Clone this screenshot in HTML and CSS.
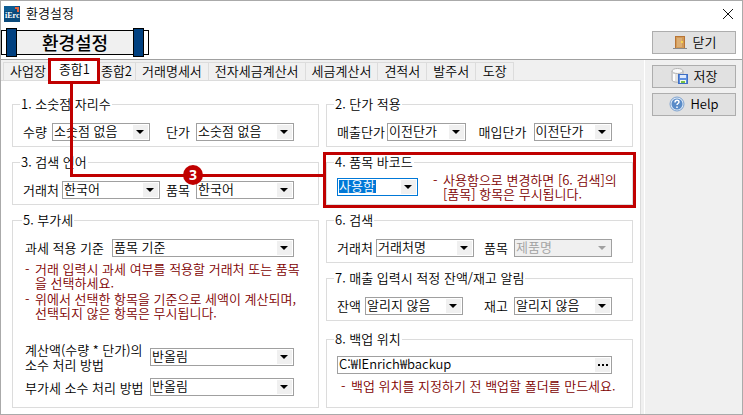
FILE: index.html
```
<!DOCTYPE html>
<html lang="ko">
<head>
    <meta charset="UTF-8">
    <meta name="viewport" content="width=device-width, initial-scale=1.0">
    <title>환경설정</title>
    <link rel="stylesheet" href="styles.css">
</head>
<body>
    <div class="window">
        <div class="titlebar">
            <svg class="app-icon" width="16" height="16" viewBox="0 0 16 16">
                <rect width="16" height="16" fill="#0a4a7c"/>
                <path d="M0 0h11v5H0z" fill="#0d5c93"/>
                <path d="M11 1h4v5h-2V3h-2z" fill="#e8643c"/>
                <text x="1" y="12" class="app-icon-text">iErc</text>
            </svg>
            <span class="title">환경설정</span>
            <button class="close" aria-label="닫기">
                <svg width="10" height="10" viewBox="0 0 10 10"><path d="M0 0l10 10M10 0L0 10" stroke="#111" fill="none"/></svg>
            </button>
        </div>

        <header class="header">
            <div class="banner"><h1>환경설정</h1></div>
            <button class="action">
                <svg width="16" height="16" viewBox="0 0 16 16">
                    <path d="M1 14.500h14" stroke="#8a8a8a"/>
                    <rect x="3" y="2" width="10" height="12" fill="#b87434"/>
                    <rect x="4" y="3" width="8" height="11" fill="#d29a58"/>
                    <rect x="5" y="4" width="5" height="9" fill="#dcae74"/>
                    <circle cx="10" cy="8" r="1" fill="#ffe24a"/>
                </svg>
                닫기
            </button>
        </header>

        <div class="body">
            <main class="main">
                <div class="tabs" role="tablist">
                    <button class="tab" role="tab">사업장</button>
                    <button class="tab active" role="tab" aria-selected="true">종합1</button>
                    <button class="tab" role="tab">종합2</button>
                    <button class="tab" role="tab">거래명세서</button>
                    <button class="tab" role="tab">전자세금계산서</button>
                    <button class="tab" role="tab">세금계산서</button>
                    <button class="tab" role="tab">견적서</button>
                    <button class="tab" role="tab">발주서</button>
                    <button class="tab" role="tab">도장</button>
                </div>

                <div class="panel" role="tabpanel">
                    <div class="column">
                        <fieldset class="group">
                            <legend>1. 소숫점 자리수</legend>
                            <div class="row decimals">
                                <label for="qty">수량</label>
                                <span class="combo"><select id="qty"><option>소숫점 없음</option></select></span>
                                <label for="price">단가</label>
                                <span class="combo"><select id="price"><option>소숫점 없음</option></select></span>
                            </div>
                        </fieldset>

                        <fieldset class="group">
                            <legend>3. 검색 언어</legend>
                            <div class="row language">
                                <label for="langClient">거래처</label>
                                <span class="combo"><select id="langClient"><option>한국어</option></select></span>
                                <label for="langItem">품목</label>
                                <span class="combo"><select id="langItem"><option>한국어</option></select></span>
                            </div>
                        </fieldset>

                        <fieldset class="group vat">
                            <legend>5. 부가세</legend>
                            <div class="row vat-base">
                                <label for="vatBase">과세 적용 기준</label>
                                <span class="combo"><select id="vatBase"><option>품목 기준</option></select></span>
                            </div>
                            <ul class="notes">
                                <li>거래 입력시 과세 여부를 적용할 거래처 또는 품목<br>을 선택하세요.</li>
                                <li>위에서 선택한 항목을 기준으로 세액이 계산되며,<br>선택되지 않은 항목은 무시됩니다.</li>
                            </ul>
                            <div class="row rounding">
                                <label for="amountRound">계산액(수량 * 단가)의<br>소수 처리 방법</label>
                                <span class="combo"><select id="amountRound"><option>반올림</option></select></span>
                                <label for="vatRound">부가세 소수 처리 방법</label>
                                <span class="combo"><select id="vatRound"><option>반올림</option></select></span>
                            </div>
                        </fieldset>
                    </div>

                    <div class="column">
                        <fieldset class="group">
                            <legend>2. 단가 적용</legend>
                            <div class="row prices">
                                <label for="salePrice">매출단가</label>
                                <span class="combo"><select id="salePrice"><option>이전단가</option></select></span>
                                <label for="buyPrice">매입단가</label>
                                <span class="combo"><select id="buyPrice"><option>이전단가</option></select></span>
                            </div>
                        </fieldset>

                        <fieldset class="group barcode">
                            <legend>4. 품목 바코드</legend>
                            <div class="row barcode-row">
                                <span class="combo focused"><select id="barcode" aria-label="품목 바코드"><option>사용함</option></select></span>
                                <ul class="notes">
                                    <li>사용함으로 변경하면 [6. 검색]의<br>[품목] 항목은 무시됩니다.</li>
                                </ul>
                            </div>
                        </fieldset>

                        <fieldset class="group">
                            <legend>6. 검색</legend>
                            <div class="row search">
                                <label for="searchClient">거래처</label>
                                <span class="combo"><select id="searchClient"><option>거래처명</option></select></span>
                                <label for="searchItem">품목</label>
                                <span class="combo disabled"><select id="searchItem" disabled><option>제품명</option></select></span>
                            </div>
                        </fieldset>

                        <fieldset class="group">
                            <legend>7. 매출 입력시 적정 잔액/재고 알림</legend>
                            <div class="row alerts">
                                <label for="balance">잔액</label>
                                <span class="combo"><select id="balance"><option>알리지 않음</option></select></span>
                                <label for="stock">재고</label>
                                <span class="combo"><select id="stock"><option>알리지 않음</option></select></span>
                            </div>
                        </fieldset>

                        <fieldset class="group backup">
                            <legend>8. 백업 위치</legend>
                            <div class="path">
                                <input type="text" id="backupPath" aria-label="백업 위치" value="C:₩IEnrich₩backup">
                                <button class="browse" aria-label="찾아보기"><i></i><i></i><i></i></button>
                            </div>
                            <ul class="notes">
                                <li>백업 위치를 지정하기 전 백업할 폴더를 만드세요.</li>
                            </ul>
                        </fieldset>
                    </div>

                    <div class="connector"><span class="step">3</span></div>
                </div>
            </main>

            <aside class="side">
                <button class="action">
                    <svg width="18" height="16" viewBox="0 0 18 16">
                        <path d="M1 3v9c0 3 11 3 11 0V3z" fill="#e2e2e2" stroke="#b4b4b4"/>
                        <ellipse cx="6.500" cy="3" rx="5.500" ry="2.500" fill="#fafafa" stroke="#b4b4b4"/>
                        <path d="M3 6v7" stroke="#fff" stroke-width="2"/>
                        <rect x="7.500" y="6.500" width="9" height="9" fill="#5f8fe0" stroke="#3f6fc4"/>
                        <rect x="9" y="7" width="6" height="3" fill="#dfeafb"/>
                        <rect x="9" y="12" width="6" height="3" fill="#f4fbe8"/>
                        <rect x="10" y="13" width="4" height="2" fill="#78c043"/>
                    </svg>
                    저장
                </button>
                <button class="action">
                    <svg width="16" height="16" viewBox="0 0 16 16">
                        <circle cx="8" cy="8" r="7" fill="#dbe7f5" stroke="#7fa3cf"/>
                        <circle cx="8" cy="8" r="5.500" fill="#5a8cc8"/>
                        <path d="M6 6.500c0-3 4-3 4-.5 0 1.500-2 1.500-2 3M8 10.500v1.500" fill="none" stroke="#fff" stroke-width="1.500"/>
                    </svg>
                    Help
                </button>
            </aside>
        </div>
    </div>
</body>
</html>
```
FILE: styles.css
```
* {
    box-sizing: border-box;
}

body {
    margin: 0;
    font-family: "Noto Sans CJK KR", "Noto Sans", sans-serif;
    font-size: 13px;
    font-weight: 350;
    line-height: 16px;
    color: #000;
    background: #fff;
}

button,
select,
input {
    font: inherit;
    color: inherit;
    margin: 0;
    padding: 0;
}

.window {
    display: flex;
    flex-direction: column;
    min-height: 100vh;
    border: 1px solid #aaa;
}

/* Title bar and header */
.titlebar {
    display: flex;
    align-items: center;
    height: 25px;
    padding: 0 9px 0 3px;
}

.app-icon-text {
    font-family: "Liberation Serif", serif;
    font-size: 8px;
    font-weight: bold;
    fill: #fff;
}

.title {
    flex: 1;
    margin-left: 6px;
    padding-bottom: 2px;
}

.close {
    display: flex;
    border: 0;
    background: none;
}

.header {
    display: flex;
    align-items: center;
    justify-content: space-between;
    height: 34px;
    padding-right: 6px;
    border-bottom: 1px solid #a0a0a0;
}

.banner {
    display: flex;
    justify-content: space-between;
    width: 148px;
    height: 25px;
    padding: 0 4px;
    border: 1px solid #000;
    background: linear-gradient(#f0f0f0, #f0f0f0) center / 128px 100% no-repeat;
}

.banner::before,
.banner::after {
    content: "";
    width: 9px;
    margin: -3px 0;
    border: 1px solid #000;
    background: #004080;
}

.banner h1 {
    margin: 0;
    font-size: 18px;
    font-weight: 500;
    line-height: 22px;
}

.action {
    display: flex;
    align-items: center;
    justify-content: center;
    gap: 5px;
    width: 84px;
    height: 23px;
    padding-bottom: 1px;
    border: 1px solid #adadad;
    background: #e1e1e1;
}

/* Body */
.body {
    display: flex;
    flex: 1;
    background: #f0f0f0;
}

.main {
    display: flex;
    flex: 1;
    flex-direction: column;
    min-width: 0;
    padding-top: 2px;
}

.side {
    display: flex;
    flex: none;
    flex-direction: column;
    gap: 5px;
    width: 98px;
    margin-left: 3px;
    padding: 5px 6px 0 7px;
    border-left: 1px solid #fff;
}

/* Tabs */
.tabs {
    display: flex;
    height: 18px;
    padding-left: 2px;
}

.tab {
    min-width: 38px;
    padding: 0 6px 1px;
    line-height: 16px;
    white-space: nowrap;
    border: 1px solid #dcdcdc;
    border-width: 1px 1px 0 0;
    background: #f0f0f0;
}

.tab:first-child {
    border-left-width: 1px;
}

.tab.active {
    position: relative;
    z-index: 1;
    margin: -2px -9px -1px -3px;
    padding: 0 9px 3px;
    border: 0;
    background: #fff;
}

.tab.active + .tab {
    padding-left: 11px;
    padding-right: 3px;
}

.tab.active::after {
    content: "";
    position: absolute;
    inset: -2px -1px -3px -2px;
    border: 3px solid #c00000;
}

.panel {
    position: relative;
    display: flex;
    flex: 1;
    gap: 7px;
    padding: 15px 7px 6px 11px;
    border: 1px solid #dcdcdc;
    border-width: 1px 1px 0 0;
    background: #fff;
}

.column {
    display: flex;
    flex: 1;
    flex-direction: column;
    gap: 7px;
    min-width: 0;
}

/* Group boxes */
.group {
    position: relative;
    min-width: 0;
    margin: 0;
    padding: 11px 24px 5px 10px;
    border: 1px solid #dcdcdc;
}

.column + .column .group {
    padding-right: 20px;
}

legend {
    margin-left: -3px;
    padding: 0 1px;
}

.row {
    display: grid;
    align-items: center;
    white-space: nowrap;
}

.decimals {
    grid-template-columns: 29px 1fr 46px 1fr;
}

.language {
    grid-template-columns: 39px 1fr 36px 1fr;
}

.prices {
    grid-template-columns: 50px 1fr 68px 1fr;
}

.search {
    grid-template-columns: 39px 1fr 40px 1fr;
}

.alerts {
    grid-template-columns: 28px 1fr 51px 1fr;
}

.decimals label + .combo + label {
    padding-left: 16px;
}

.language label + .combo + label {
    padding-left: 6px;
}

.prices label + .combo + label {
    padding-left: 13px;
}

.search label + .combo + label {
    padding-left: 10px;
}

.alerts label + .combo + label {
    padding-left: 21px;
}

.combo {
    position: relative;
    display: flex;
    height: 18px;
    border: 1px solid #a0a0a0;
    background: #fff;
}

.combo select {
    appearance: none;
    width: 100%;
    height: 18px;
    margin-top: -2px;
    padding: 0 18px 0 1px;
    line-height: 18px;
    border: 0;
    border-radius: 0;
    outline: 0;
    background: none;
}

.combo::before {
    content: "";
    position: absolute;
    top: 1px;
    right: 1px;
    width: 15px;
    height: 14px;
    background: #f0f0f0;
    pointer-events: none;
}

.combo::after {
    content: "";
    position: absolute;
    top: 6px;
    right: 5px;
    border: 4px solid transparent;
    border-top-color: #000;
    border-bottom: 0;
    pointer-events: none;
}

.combo.disabled {
    color: #a0a0a0;
    background: #f0f0f0;
}

.combo.disabled select {
    opacity: 1;
}

.combo.disabled::after {
    border-top-color: #a0a0a0;
}

.combo.focused {
    color: #fff;
    border-color: #0078d7;
    background: linear-gradient(#0078d7, #0078d7) 1px 1px / 37px 13px no-repeat #fff;
}

.notes {
    margin: 0;
    padding: 0;
    list-style: none;
    line-height: 14px;
    white-space: nowrap;
    color: #800000;
}

.notes li {
    display: flex;
}

.notes li::before {
    content: "-";
    flex: none;
    width: 10px;
}

/* 5. VAT */
.vat {
    flex: 1;
    padding-left: 12px;
}

.vat-base {
    grid-template-columns: 87px 1fr;
}

.vat .notes {
    display: grid;
    gap: 2px;
    margin: 5px 0 22px;
}

.rounding {
    grid-template-columns: 125px 1fr;
    row-gap: 6px;
    line-height: 15px;
}

/* 4. Barcode */
.barcode {
    padding-top: 3px;
    padding-bottom: 3px;
}

.barcode-row {
    grid-template-columns: 81px auto;
    column-gap: 15px;
    justify-content: start;
}

.barcode::after {
    content: "";
    position: absolute;
    inset: -18px -4px -4px;
    border: 3px solid #c00000;
    pointer-events: none;
}

/* 8. Backup */
.backup {
    margin-top: auto;
    padding-top: 9px;
    padding-bottom: 14px;
}

.path {
    display: flex;
    height: 18px;
    padding: 1px;
    border: 1px solid #a0a0a0;
}

.path input {
    flex: 1;
    min-width: 0;
    padding-bottom: 2px;
    border: 0;
    outline: 0;
}

.browse {
    display: flex;
    align-items: center;
    justify-content: center;
    gap: 2px;
    width: 15px;
    border: 0;
    background: #f0f0f0;
}

.browse i {
    width: 2px;
    height: 2px;
    background: #000;
}

.backup .notes {
    margin: 5px 0 0 4px;
}

/* Callout line from the tab to the barcode group */
.connector {
    position: absolute;
    top: 2px;
    left: 69px;
    width: calc(50% - 66px);
    height: 94px;
    border: 3px solid #c00000;
    border-width: 0 0 3px 3px;
    pointer-events: none;
}

.step {
    position: absolute;
    bottom: -11px;
    left: 110px;
    width: 20px;
    height: 20px;
    border-radius: 50%;
    font: bold 14px/20px "Noto Sans", sans-serif;
    text-align: center;
    color: #fff;
    background: #c00000;
}
```
